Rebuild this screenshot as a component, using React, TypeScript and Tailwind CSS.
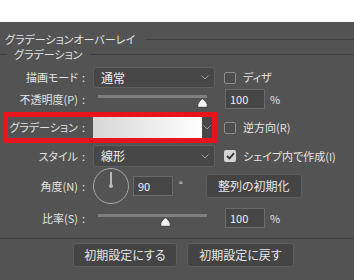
import React from "react";

const font = {
  fontFamily: '"Noto Sans CJK JP", "Noto Sans", sans-serif',
};

const Chevron = () => (
  <svg width="8" height="5" viewBox="0 0 8 5" className="shrink-0">
    <path d="M0.5 0.5 L4 4 L7.5 0.5" fill="none" stroke="#9a9a9a" strokeWidth="1" />
  </svg>
);

const Thumb = () => (
  <svg width="11" height="10" viewBox="0 0 11 10">
    <path
      d="M5.5 0.8 C6.5 0.8 10.2 5 10.2 6.5 V9.3 H0.8 V6.5 C0.8 5 4.5 0.8 5.5 0.8 Z"
      fill="#f2f2f2"
      stroke="#2e2e2e"
      strokeWidth="0.8"
    />
  </svg>
);

const Label = ({ text }: { text: string }) => (
  <div className="w-[86px] shrink-0 flex justify-end items-center pr-[1px] whitespace-nowrap">
    <span>{text}</span>
    <span className="ml-[4px]">:</span>
  </div>
);

const Select = ({ value }: { value: string }) => (
  <div className="ml-[7px] w-[122px] h-full flex items-center justify-between pl-[7px] pr-[5px] bg-[#474747] border border-[#5f5f5f] rounded-[3px]">
    <span className="text-[#eeeeee] text-[12px]">{value}</span>
    <Chevron />
  </div>
);

const Checkbox = ({ label, checked }: { label: React.ReactNode; checked?: boolean }) => (
  <div className="flex items-center whitespace-nowrap">
    {checked ? (
      <div className="w-[12px] h-[12px] rounded-[2px] bg-[#d4d4d4] flex items-center justify-center">
        <svg width="9" height="8" viewBox="0 0 9 8">
          <path d="M1 4 L3.5 6.5 L8 1.2" fill="none" stroke="#333333" strokeWidth="1.8" />
        </svg>
      </div>
    ) : (
      <div className="w-[12px] h-[12px] rounded-[2px] border border-[#8a8a8a] bg-[#4d4d4d]" />
    )}
    <span className="ml-[7px]">{label}</span>
  </div>
);

const NumInput = ({ value }: { value: string }) => (
  <div className="w-[40px] h-[20px] flex items-center pl-[4px] bg-[#464646] border border-[#6a6a6a] text-[#f0f0f0]">
    {value}
  </div>
);

const Slider = ({ pos }: { pos: number }) => (
  <div className="ml-[12px] w-[109px] h-full relative">
    <div className="absolute left-0 right-0 top-[6px] h-[3px] bg-[#7e7e7e]" />
    <div className="absolute top-[9px]" style={{ left: pos - 5 }}>
      <Thumb />
    </div>
  </div>
);

const Button = ({ text, w }: { text: string; w: string }) => (
  <div
    className={`${w} h-[24px] flex items-center justify-center bg-[#444444] border border-[#5e5e5e] rounded-[3px] text-[#e6e6e6] text-[12px] whitespace-nowrap`}
  >
    {text}
  </div>
);

export default function App() {
  return (
    <div className="w-[354px] h-[280px] overflow-hidden text-[11px] leading-none" style={{ ...font, fontFeatureSettings: '"palt"' }}>
      <div className="h-[22px] bg-white" />
      <div className="h-[258px] bg-[#535353] text-[#e2e2e2] flex flex-col">
        {/* title */}
        <div className="mt-[9px] h-[16px] flex items-center pl-[5px] whitespace-nowrap">
          <span>グラデーションオーバーレイ</span>
          <div className="flex-1 ml-[10px] h-px bg-[#3e3e3e]" />
        </div>
        <div className="h-[14px] flex items-center whitespace-nowrap">
          <div className="w-[7px] h-px bg-[#3e3e3e]" />
          <span className="px-[7px]">グラデーション</span>
          <div className="flex-1 h-px bg-[#3e3e3e]" />
        </div>

        {/* 描画モード */}
        <div className="mt-[6px] h-[21px] flex items-center">
          <Label text="描画モード" />
          <Select value="通常" />
          <div className="ml-[9px]">
            <Checkbox label="ディザ" />
          </div>
        </div>

        {/* 不透明度 */}
        <div className="mt-[1px] h-[20px] flex items-center">
          <Label text="不透明度(P)" />
          <Slider pos={104} />
          <div className="ml-[18px]">
            <NumInput value="100" />
          </div>
          <span className="ml-[5px]">%</span>
        </div>

        {/* グラデーション */}
        <div className="mt-[3px] h-[31px] flex items-center">
          <div className="ml-[3px] w-[214px] h-[31px] border-[5px] border-[#e8141c] flex items-center">
            <div className="w-[77px] shrink-0 flex justify-end items-center whitespace-nowrap">
              <span>グラデーション</span>
              <span className="ml-[4px]">:</span>
            </div>
            <div className="ml-[8px] w-[109px] h-full bg-[linear-gradient(to_right,#d6d6d6,#ffffff)]" />
            <div className="w-[10px] h-full bg-[#474747] flex items-center justify-center">
              <Chevron />
            </div>
          </div>
          <div className="ml-[7px]">
            <Checkbox label="逆方向(R)" />
          </div>
        </div>

        {/* スタイル */}
        <div className="mt-[2px] h-[22px] flex items-center">
          <Label text="スタイル" />
          <Select value="線形" />
          <div className="ml-[9px]">
            <Checkbox checked label="シェイプ内で作成(I)" />
          </div>
        </div>

        {/* 角度 */}
        <div className="mt-[1px] h-[36px] flex items-center">
          <Label text="角度(N)" />
          <div className="ml-[7px] w-[36px] h-[36px] rounded-full border-[1.5px] border-[#a6a6a6] flex flex-col items-center">
            <div className="mt-[3px] w-[1.5px] h-[14px] bg-[#b8b8b8]" />
            <div className="-mt-[2px] w-[4px] h-[4px] rounded-full bg-[#b8b8b8]" />
          </div>
          <div className="ml-[4px]">
            <NumInput value="90" />
          </div>
          <span className="ml-[6px] -mt-[3px] text-[10px]">°</span>
          <div className="ml-[23px]">
            <Button text="整列の初期化" w="w-[96px]" />
          </div>
        </div>

        {/* 比率 */}
        <div className="mt-[4px] h-[20px] flex items-center">
          <Label text="比率(S)" />
          <Slider pos={67} />
          <div className="ml-[18px]">
            <NumInput value="100" />
          </div>
          <span className="ml-[5px]">%</span>
        </div>

        <div className="mt-[10px] h-px bg-[#404040]" />

        <div className="mt-[4px] flex">
          <div className="ml-[73px]">
            <Button text="初期設定にする" w="w-[104px]" />
          </div>
          <div className="ml-[10px]">
            <Button text="初期設定に戻す" w="w-[107px]" />
          </div>
        </div>
      </div>
    </div>
  );
}
